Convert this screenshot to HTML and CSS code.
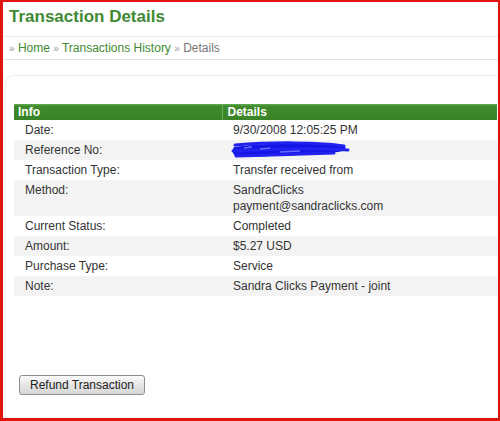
FILE: index.html
```html
<!DOCTYPE html>
<html lang="en">
<head>
    <meta charset="UTF-8">
    <title>Transaction Details</title>
    <link rel="stylesheet" href="styles.css">
</head>
<body>
<div class="frame">
    <h1 class="title">Transaction Details</h1>

    <div class="crumbs">
        <span class="arr">&raquo;</span> <a href="#">Home</a>
        <span class="arr">&raquo;</span> <a href="#">Transactions History</a>
        <span class="arr">&raquo;</span> <span class="here">Details</span>
    </div>

    <div class="panel">
        <table class="details">
            <tr class="head">
                <th class="c1">Info</th>
                <th class="c2">Details</th>
            </tr>
            <tr><td class="c1">Date:</td><td class="c2">9/30/2008 12:05:25 PM</td></tr>
            <tr class="alt"><td class="c1">Reference No:</td>
                <td class="c2">
                    <svg class="scribble" width="120" height="18" viewBox="0 0 120 18">
                        <path d="M4 6 C30 2 80 1 112 4 C118 6 116 10 108 11 C80 14 40 15 6 16 C2 12 2 9 4 6 Z" fill="#1414e6"/>
                        <path d="M5 4 C40 1 90 1 114 5 M3 10 C40 8 90 7 118 9 M6 15 C40 14 80 13 104 12"
                              fill="none" stroke="#2222f0" stroke-width="3" stroke-linecap="round"/>
                        <path d="M14 7 L22 6 M30 8 L40 7 M50 11 L70 10" stroke="#6a6aff" stroke-width="1.5"/>
                    </svg>
                </td>
            </tr>
            <tr><td class="c1">Transaction Type:</td><td class="c2">Transfer received from</td></tr>
            <tr class="alt"><td class="c1">Method:</td><td class="c2">SandraClicks<br>payment@sandraclicks.com</td></tr>
            <tr><td class="c1">Current Status:</td><td class="c2">Completed</td></tr>
            <tr class="alt"><td class="c1">Amount:</td><td class="c2">$5.27 USD</td></tr>
            <tr><td class="c1">Purchase Type:</td><td class="c2">Service</td></tr>
            <tr class="alt"><td class="c1">Note:</td><td class="c2">Sandra Clicks Payment - joint</td></tr>
        </table>

        <div class="actions">
            <button class="btn">Refund Transaction</button>
        </div>
    </div>
</div>
</body>
</html>
```

FILE: styles.css
```css
body{
    margin: 0;
    font-family: "Liberation Sans", Arial, sans-serif;
    background: #fff;
}
.frame{
    box-sizing: border-box;
    width: 500px;
    height: 421px;
    border: 2px solid #e0140f;
    border-left-width: 3px;
    border-bottom-width: 3px;
    overflow: hidden;
}
.title{
    margin: 0;
    padding: 5px 0 0 6px;
    height: 29px;
    box-sizing: border-box;
    font-size: 17px;
    font-weight: bold;
    color: #3f8a33;
}
.crumbs{
    margin: 5px 0 0 2px;
    height: 22px;
    border-top: 1px solid #e6e6e6;
    border-bottom: 1px solid #e3e3e3;
    padding-left: 4px;
    font-size: 12px;
    line-height: 22px;
    color: #888;
}
.crumbs a{
    color: #3f8a33;
    text-decoration: none;
}
.crumbs .arr{
    font-size: 10px;
    color: #999;
}
.crumbs .here{
    color: #777;
}
.panel{
    margin: 15px 0 0 2px;
    height: 400px;
    border-top: 1px solid #ececec;
    border-left: 1px solid #ececec;
    border-top-left-radius: 9px;
    padding: 28px 0 0 8px;
}
.details{
    border-collapse: collapse;
    width: 483px;
    font-size: 12px;
    color: #333;
}
.details td{
    padding: 2px 0 2px 11px;
    line-height: 16px;
    vertical-align: top;
}
.details .c1{
    width: 197px;
}
.details .alt td{
    background: #f3f3f3;
}
.head th{
    background: linear-gradient(#5aa44a 0, #5aa44a 1px, #3f8a2c 2px, #3a8428 100%);
    color: #fff;
    font-weight: bold;
    text-align: left;
    padding: 0 0 0 4px;
    height: 16px;
    line-height: 16px;
}
.head th.c2{
    border-left: 1px solid #6aae58;
    padding-left: 5px;
}
.scribble{
    display: block;
    margin: -1px 0 -1px -3px;
}
.actions{
    margin-top: 79px;
    padding-left: 5px;
}
.btn{
    font-family: "Liberation Sans", Arial, sans-serif;
    font-size: 12px;
    color: #222;
    height: 20px;
    width: 126px;
    padding: 0;
    border: 1px solid #8e8e8e;
    border-radius: 3px;
    background: linear-gradient(#fafafa, #e6e6e6 50%, #d6d6d6);
}
```
